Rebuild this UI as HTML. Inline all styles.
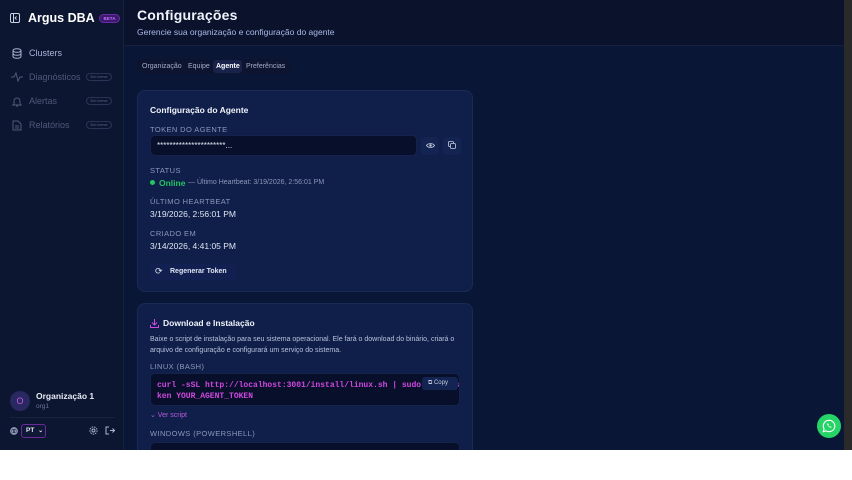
<!DOCTYPE html>
<html><head><meta charset="utf-8"><style>
*{box-sizing:border-box;margin:0;padding:0}
body{width:852px;height:480px;background:#fff;font-family:"Liberation Sans",sans-serif;overflow:hidden;position:relative}
#app{position:absolute;left:0;top:0;width:852px;height:450px;background:#0a1636;overflow:hidden}
#side{position:absolute;left:0;top:0;width:124px;height:450px;background:#0d1631;border-right:1px solid #17213f}
#hdr{position:absolute;left:124px;top:0;width:720px;height:46px;background:#0b132c;border-bottom:1px solid #17213f}
#sb{position:absolute;left:844px;top:0;width:8px;height:450px;background:#2a2a2a}
.t{position:absolute;white-space:nowrap}
.soon{position:absolute;left:86px;width:26px;height:8px;border:1px solid #2a3556;border-radius:5px;font-size:4px;color:#5a6585;text-align:center;line-height:6px}
.card{position:absolute;left:137px;width:336px;background:#0f1f4a;border:1px solid #1a2a57;border-radius:8px}
.lbl{position:absolute;left:12px;font-size:7.5px;color:#8a97b8;letter-spacing:.4px}
.val{position:absolute;left:12px;font-size:8.5px;color:#dfe5f3}
.code{position:absolute;left:12px;width:310px;background:#070f2a;border:1px solid #16224a;border-radius:5px;font-family:"Liberation Mono",monospace;font-size:8px;color:#d048e0;font-weight:bold;overflow:hidden;white-space:nowrap}
</style></head><body><div id="app">
<div id="side">
 <svg class="t" style="left:10px;top:13px" width="10" height="10" viewBox="0 0 10 10"><rect x="0.5" y="0.5" width="9" height="9" rx="1.5" fill="none" stroke="#c8cfe0"/><path d="M3.5 1v8M6.5 3.5L5 5l1.5 1.5" stroke="#c8cfe0" fill="none"/></svg>
 <div class="t" style="left:28px;top:11px;font-size:12.5px;font-weight:bold;color:#fff">Argus DBA</div>
 <div class="t" style="left:99px;top:14px;width:21px;height:9px;border-radius:5px;background:#3a1a6a;border:1px solid #6a2aa8;color:#c070ff;font-size:4.5px;text-align:center;line-height:7px;font-weight:bold">BETA</div>
 <svg class="t" style="left:12px;top:48px" width="10" height="11" viewBox="0 0 10 11"><ellipse cx="5" cy="2.5" rx="4" ry="1.8" fill="none" stroke="#aab4d2"/><path d="M1 2.5v6c0 1 1.8 1.8 4 1.8s4-.8 4-1.8v-6M1 5.5c0 1 1.8 1.8 4 1.8s4-.8 4-1.8" fill="none" stroke="#aab4d2"/></svg>
 <div class="t" style="left:29px;top:48px;font-size:9px;color:#aab4d8">Clusters</div>
 <svg class="t" style="left:11px;top:72px" width="12" height="10"><path d="M0 5h3l2-4 2 8 2-4h3" fill="none" stroke="#4e5a7a"/></svg>
 <div class="t" style="left:29px;top:72px;font-size:9px;color:#4e5a7a">Diagnósticos</div><div class="soon" style="top:73px">Em breve</div>
 <svg class="t" style="left:12px;top:96px" width="10" height="11"><path d="M2 8V5a3 3 0 0 1 6 0v3l1 1H1zM4 10h2" fill="none" stroke="#4e5a7a"/></svg>
 <div class="t" style="left:29px;top:96px;font-size:9px;color:#4e5a7a">Alertas</div><div class="soon" style="top:97px">Em breve</div>
 <svg class="t" style="left:12px;top:120px" width="10" height="11"><path d="M1 1h5l3 3v6H1zM3 6h4M3 8h4" fill="none" stroke="#4e5a7a"/></svg>
 <div class="t" style="left:29px;top:120px;font-size:9px;color:#4e5a7a">Relatórios</div><div class="soon" style="top:121px">Em breve</div>
 <div class="t" style="left:10px;top:391px;width:20px;height:20px;border-radius:50%;background:#2a2860;color:#c05adf;font-size:9px;text-align:center;line-height:20px">O</div>
 <div class="t" style="left:36px;top:391px;font-size:8.5px;font-weight:bold;color:#e8ecf5">Organização 1</div>
 <div class="t" style="left:36px;top:403px;font-size:6.5px;color:#6a7698">org1</div>
 <div class="t" style="left:10px;top:417px;width:105px;border-top:1px solid #18223f"></div>
 <svg class="t" style="left:10px;top:427px" width="8" height="8"><circle cx="4" cy="4" r="3.3" fill="none" stroke="#aab4d2"/><path d="M.7 4h6.6M4 .7c-2 2-2 4.6 0 6.6M4 .7c2 2 2 4.6 0 6.6" fill="none" stroke="#aab4d2" stroke-width=".7"/></svg>
 <div class="t" style="left:21px;top:424px;width:25px;height:14px;border:1px solid #6a2a9a;border-radius:3px;background:#101838;color:#e8ecf5;font-size:6.5px;font-weight:bold;line-height:12px;padding-left:4px">PT <span style="font-size:6px;margin-left:2px">⌄</span></div>
 <svg class="t" style="left:89px;top:426px" width="9" height="9"><circle cx="4.5" cy="4.5" r="1.5" fill="none" stroke="#aab4d2"/><circle cx="4.5" cy="4.5" r="3.6" fill="none" stroke="#aab4d2" stroke-dasharray="1.5 1"/></svg>
 <svg class="t" style="left:105px;top:426px" width="10" height="9"><path d="M4 1H1v7h3M5 4.5h4.5M7.5 2.5l2 2-2 2" fill="none" stroke="#aab4d2"/></svg>
</div>
<div id="hdr">
 <div class="t" style="left:13px;top:7px;font-size:14px;font-weight:bold;color:#f0f3fa;letter-spacing:.2px">Configurações</div>
 <div class="t" style="left:13px;top:27px;font-size:8.5px;color:#a8b8e8">Gerencie sua organização e configuração do agente</div>
</div>
<div class="t" style="left:137px;top:59px;width:153px;height:15px;background:#0c1430;border-radius:4px"></div>
<div class="t" style="left:213px;top:60px;width:29px;height:13px;background:#18224a;border-radius:3px"></div>
<div class="t" style="left:142px;top:63px;font-size:7px;color:#a3acc6">Organização</div>
<div class="t" style="left:188px;top:63px;font-size:7px;color:#a3acc6">Equipe</div>
<div class="t" style="left:216px;top:63px;font-size:7px;color:#fff;font-weight:bold">Agente</div>
<div class="t" style="left:246px;top:63px;font-size:7px;color:#a3acc6">Preferências</div>

<div class="card" style="top:90px;height:202px">
 <div class="t" style="left:12px;top:14px;font-size:8.5px;font-weight:bold;color:#f0f3fa">Configuração do Agente</div>
 <div class="lbl" style="top:34px">TOKEN DO AGENTE</div>
 <div class="t" style="left:12px;top:44px;width:267px;height:21px;background:#070f2a;border-radius:5px;border:1px solid #16224a;color:#dfe5f3;font-size:8px;line-height:20px;padding-left:6px">**********************...</div>
 <div class="t" style="left:283px;top:46px;width:18px;height:18px;border-radius:4px;background:#132352"></div>
 <svg class="t" style="left:288px;top:51px" width="9" height="7"><path d="M.5 3.5C2 1 7 1 8.5 3.5 7 6 2 6 .5 3.5z" fill="none" stroke="#c8cfe0" stroke-width=".8"/><circle cx="4.5" cy="3.5" r="1.2" fill="#c8cfe0"/></svg>
 <div class="t" style="left:305px;top:46px;width:18px;height:18px;border-radius:4px;background:#132352"></div>
 <svg class="t" style="left:310px;top:50px" width="8" height="8"><rect x=".5" y=".5" width="5" height="5" rx="1" fill="none" stroke="#c8cfe0" stroke-width=".8"/><rect x="2.5" y="2.5" width="5" height="5" rx="1" fill="#132352" stroke="#c8cfe0" stroke-width=".8"/></svg>
 <div class="lbl" style="top:75px">STATUS</div>
 <div class="t" style="left:12px;top:89px;width:5px;height:5px;border-radius:50%;background:#22c55e"></div>
 <div class="t" style="left:21px;top:87px;font-size:8.5px;color:#22c55e;font-weight:bold">Online</div>
 <div class="t" style="left:50px;top:88px;font-size:7px;color:#8a97b8">— Último Heartbeat: 3/19/2026, 2:56:01 PM</div>
 <div class="lbl" style="top:106px">ÚLTIMO HEARTBEAT</div>
 <div class="val" style="top:118px">3/19/2026, 2:56:01 PM</div>
 <div class="lbl" style="top:138px">CRIADO EM</div>
 <div class="val" style="top:150px">3/14/2026, 4:41:05 PM</div>
 <div class="t" style="left:12px;top:173px;width:86px;height:16px;border-radius:4px;background:#112050"></div>
 <div class="t" style="left:17px;top:175px;font-size:9px;color:#dfe5f3">⟳</div>
 <div class="t" style="left:32px;top:177px;font-size:7px;font-weight:bold;color:#dfe5f3">Regenerar Token</div>
</div>

<div class="card" style="top:303px;height:160px">
 <svg class="t" style="left:12px;top:15px" width="9" height="9"><path d="M4.5 0v6M2 3.5l2.5 2.5 2.5-2.5M.5 6v2.5h8V6" fill="none" stroke="#d048e0"/></svg>
 <div class="t" style="left:25px;top:14px;font-size:8.5px;font-weight:bold;color:#f0f3fa">Download e Instalação</div>
 <div class="t" style="left:12px;top:30px;font-size:7px;color:#b8c2dc;line-height:11px;white-space:normal;width:318px">Baixe o script de instalação para seu sistema operacional. Ele fará o download do binário, criará o arquivo de configuração e configurará um serviço do sistema.</div>
 <div class="lbl" style="top:58px">LINUX (BASH)</div>
 <div class="code" style="top:69px;height:33px;padding:6px 6px;line-height:11px">curl -sSL http://localhost:3001/install/linux.sh | sudo bash -s<br>ken YOUR_AGENT_TOKEN</div>
 <div class="t" style="left:284px;top:73px;width:36px;height:13px;border-radius:3px;background:#132352;color:#c8cfe0;font-size:6px;line-height:13px;padding-left:6px">⧉ Copy</div>
 <div class="t" style="left:12px;top:107px;font-size:7px;color:#c05adf">⌄ Ver script</div>
 <div class="lbl" style="top:125px">WINDOWS (POWERSHELL)</div>
 <div class="code" style="top:138px;height:30px"></div>
</div>
<div class="t" style="left:817px;top:414px;width:24px;height:24px;border-radius:50%;background:#25d366"></div>
<svg class="t" style="left:822px;top:419px" width="14" height="14" viewBox="0 0 14 14"><path d="M7 1.3a5.7 5.7 0 0 0-4.9 8.6L1.3 12.7l2.9-.8A5.7 5.7 0 1 0 7 1.3z" fill="none" stroke="#fff" stroke-width="1.1"/><path d="M5 4.5c.3 2 1.8 3.8 4 4.3l.6-.9-1-.6-.5.5c-.8-.3-1.5-1-1.8-1.8l.5-.5-.6-1z" fill="#fff"/></svg>
<div id="sb"></div>
</div></body></html>
